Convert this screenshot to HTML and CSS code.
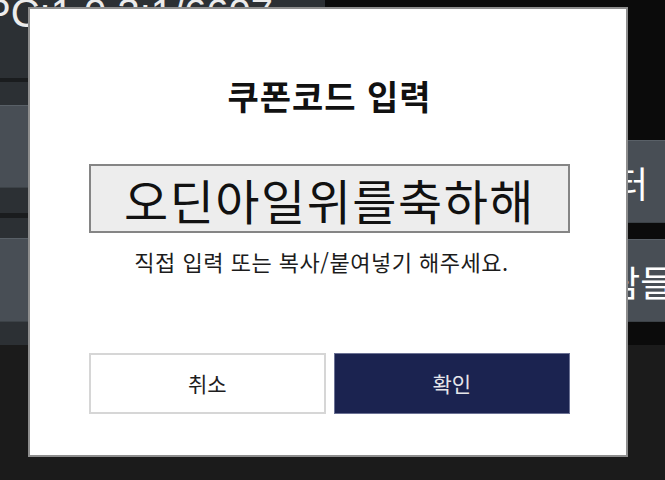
FILE: index.html
```html
<!DOCTYPE html>
<html lang="ko">
  <head>
    <meta charset="utf-8" />
    <title>쿠폰코드 입력</title>
    <link rel="stylesheet" href="styles.css">
  </head>
  <body>
    <div class="screen">
      <div class="backdrop">
        <div class="side side-left">
          <div class="status">
            <span class="version">PC:1.0.3:1/6607</span>
          </div>
          <div class="rule"></div>
          <div class="spacer s23"></div>
          <div class="tile"></div>
          <div class="spacer s25"></div>
          <div class="rule thin"></div>
          <div class="spacer s20"></div>
          <div class="tile"></div>
          <div class="spacer s23"></div>
        </div>
        <div class="side side-right">
          <div class="spacer s140"></div>
          <div class="tile"><span class="tile-label first">센터</span></div>
          <div class="spacer s16"></div>
          <div class="tile"><span class="tile-label second">사람들</span></div>
          <div class="spacer s23"></div>
        </div>
      </div>

      <section class="dialog">
        <h2 class="dialog-title">쿠폰코드 입력</h2>
        <div class="code-field">오딘아일위를축하해</div>
        <p class="hint">직접 입력 또는 복사/붙여넣기 해주세요.</p>
        <div class="actions">
          <button class="btn btn-cancel">취소</button>
          <button class="btn btn-ok">확인</button>
        </div>
      </section>
    </div>
  </body>
</html>
```

FILE: styles.css
```css
/* || Initial styles */

* {
  box-sizing: border-box;
}

body {
  margin: 0;
  font-family: "Noto Sans CJK KR", "Noto Sans", sans-serif;
  background-color: #1b1b1b;
}

/* || Backdrop (game menu behind the dialog) */

.screen {
  position: relative;
  width: 665px;
  height: 480px;
  overflow: hidden;
  background-color: #1b1b1b;
}

.backdrop {
  display: grid;
  grid-template-columns: 325px 340px;
}

.side {
  display: flex;
  flex-direction: column;
}

.side-left {
  background-color: #2c3034;
}

.side-right {
  background-color: #0b0b0b;
}

.status {
  height: 78px;
  overflow: hidden;
}

.version {
  display: block;
  margin: -7px 0 0 -16px;
  font-family: "Liberation Sans", sans-serif;
  font-size: 40px;
  line-height: 1;
  color: #ececec;
  white-space: nowrap;
}

.rule {
  height: 4px;
  background-color: #1a1c1e;
}

.rule.thin {
  height: 5px;
}

.s23 { height: 23px; }
.s25 { height: 25px; }
.s20 { height: 20px; }
.s16 { height: 16px; }
.s140 { height: 140px; }

.tile {
  display: flex;
  align-items: center;
  height: 83px;
  background-color: #484e55;
  border-top: 1px solid #596067;
  border-bottom: 1px solid #3c4247;
  overflow: hidden;
}

.side-left .tile + .spacer + .rule + .spacer + .tile {
  height: 84px;
}

.side-right .tile:last-of-type {
  height: 84px;
}

.tile-label {
  font-size: 36px;
  line-height: 1;
  color: #ffffff;
  white-space: nowrap;
}

.tile-label.first {
  padding-left: 257px;
}

.tile-label.second {
  padding-left: 249px;
}

/* || Dialog */

.dialog {
  position: absolute;
  top: 7px;
  left: 28px;
  width: 600px;
  height: 450px;
  padding: 70px 56px 0 59px;
  background-color: #ffffff;
  border: 2px solid #8e8e8e;
}

.dialog-title {
  margin: 0;
  font-size: 34px;
  font-weight: bold;
  line-height: 1;
  letter-spacing: 1px;
  text-align: center;
  color: #111111;
}

.code-field {
  display: flex;
  align-items: center;
  justify-content: center;
  height: 69px;
  margin-top: 51px;
  background-color: #ededed;
  border: 2px solid #858585;
  font-size: 48px;
  line-height: 1;
  letter-spacing: 1.5px;
  color: #111111;
}

.hint {
  margin: 17px 0 0;
  padding-right: 16px;
  font-size: 22px;
  line-height: 1;
  letter-spacing: 0.5px;
  text-align: center;
  color: #1c1c1c;
}

.actions {
  display: grid;
  grid-template-columns: 1fr 1fr;
  gap: 8px;
  margin-top: 81px;
}

.btn {
  height: 61px;
  font-family: inherit;
  font-size: 21px;
  line-height: 1;
  cursor: pointer;
}

.btn-cancel {
  background-color: #ffffff;
  border: 2px solid #d6d6d6;
  color: #1e1e1e;
}

.btn-ok {
  background-color: #1b2350;
  border: 1px solid #6b7194;
  color: #e6e6ea;
}
```
